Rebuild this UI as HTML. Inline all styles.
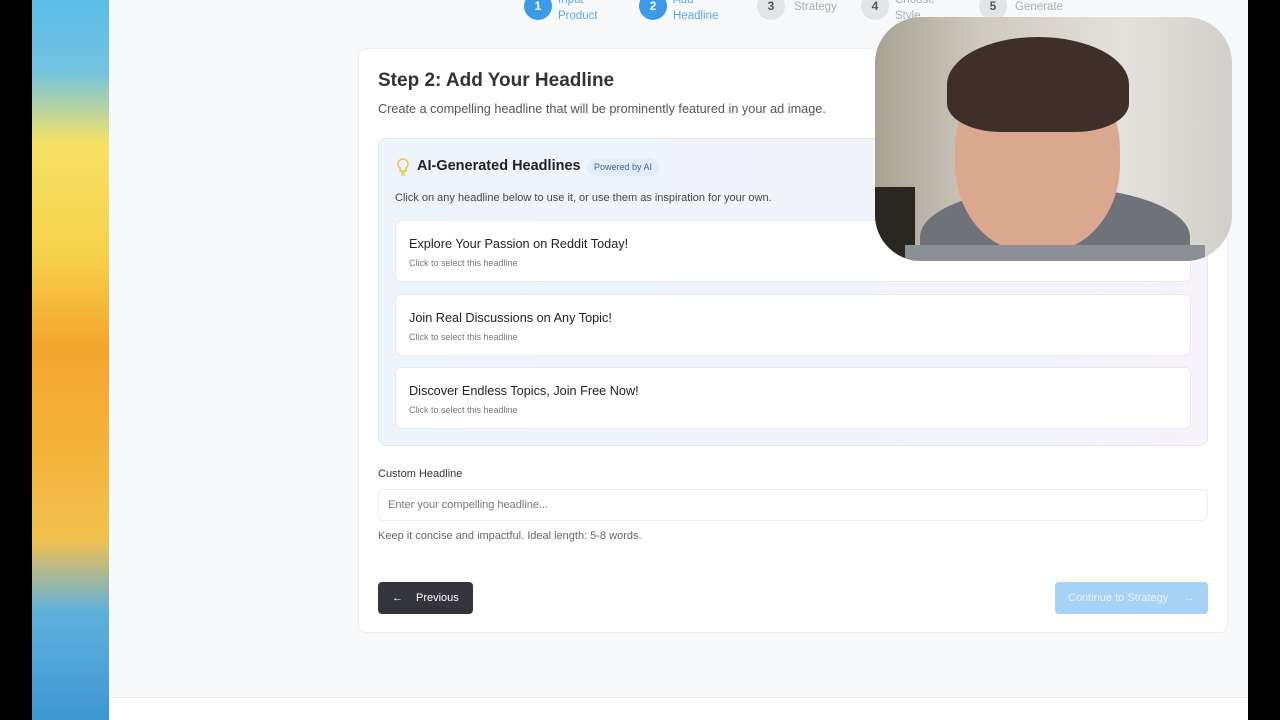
<!DOCTYPE html>
<html><head><meta charset="utf-8"><style>
*{margin:0;padding:0;box-sizing:border-box}
body{width:1280px;height:720px;overflow:hidden;position:relative;background:#f7f9fb;font-family:"Liberation Sans",sans-serif;color:#333}
.abs{position:absolute}
.circ{position:absolute;width:28px;height:28px;border-radius:50%;font-size:12px;font-weight:bold;display:flex;align-items:center;justify-content:center;top:-8px}
.lbl{position:absolute;font-size:11.5px;line-height:16px}
.item{position:absolute;left:395px;width:796px;height:62px;background:#fff;border:1px solid #e6e9ee;border-radius:6px}
.item .t{position:absolute;left:13px;top:16px;font-size:12.7px;color:#222}
.item .s{position:absolute;left:13px;top:37px;font-size:9px;color:#777}
</style></head><body>
<div class="abs" style="left:0;top:0;width:32px;height:720px;background:#000"></div>
<div class="abs" style="left:32px;top:0;width:77px;height:720px;background:linear-gradient(180deg,#5bbde8 0%,#75c3e0 10%,#f6e164 20%,#f6d24c 35%,#f3a52e 48%,#f5b33a 62%,#f0c050 75%,#5fb1dc 85%,#3e96d2 100%)"></div>
<div class="abs" style="left:1248px;top:0;width:32px;height:720px;background:#000"></div>
<div class="abs" style="left:109px;top:697px;width:1139px;height:23px;background:#fff;border-top:1px solid #e8ebef"></div>

<div class="circ" style="left:524px;background:#3b9be6;color:#fff">1</div>
<div class="lbl" style="left:558px;top:-8px;color:#5aa8e0">Input<br>Product</div>
<div class="circ" style="left:639px;background:#3b9be6;color:#fff">2</div>
<div class="lbl" style="left:673px;top:-8px;color:#5aa8e0">Add<br>Headline</div>
<div class="circ" style="left:757px;background:#e2e4e8;color:#555">3</div>
<div class="lbl" style="left:794px;top:-1px;color:#aaa">Strategy</div>
<div class="circ" style="left:861px;background:#e2e4e8;color:#555">4</div>
<div class="lbl" style="left:895px;top:-8px;color:#aaa">Choose<br>Style</div>
<div class="circ" style="left:979px;background:#e2e4e8;color:#555">5</div>
<div class="lbl" style="left:1015px;top:-1px;color:#aaa">Generate</div>

<div class="abs" style="left:358px;top:48px;width:870px;height:585px;background:#fff;border:1px solid #eceff2;border-radius:8px"></div>
<div class="abs" style="left:378px;top:70px;font-size:19px;font-weight:bold;color:#333">Step 2: Add Your Headline</div>
<div class="abs" style="left:378px;top:102px;font-size:12.7px;color:#555">Create a compelling headline that will be prominently featured in your ad image.</div>

<div class="abs" style="left:378px;top:138px;width:830px;height:308px;background:linear-gradient(90deg,#eef4fc,#f4f4fc 80%,#f8f2fa);border:1px solid #e3e8f0;border-radius:8px"></div>
<svg class="abs" style="left:396px;top:158px" width="14" height="18" viewBox="0 0 14 18"><path d="M7 1a5 5 0 0 0-3 9v3h6v-3a5 5 0 0 0-3-9z M5 15h4 M5.5 17h3" fill="none" stroke="#e8c44a" stroke-width="1.5"/></svg>
<div class="abs" style="left:417px;top:158px;font-size:14.5px;font-weight:bold;color:#222">AI-Generated Headlines</div>
<div class="abs" style="left:587px;top:158px;height:18px;padding:0 7px;border-radius:9px;background:#e3edfa;color:#3c5fa8;font-size:9px;line-height:18px">Powered by AI</div>
<div class="abs" style="left:395px;top:192px;font-size:11px;color:#444">Click on any headline below to use it, or use them as inspiration for your own.</div>

<div class="item" style="top:220px"><div class="t">Explore Your Passion on Reddit Today!</div><div class="s">Click to select this headline</div></div>
<div class="item" style="top:294px"><div class="t">Join Real Discussions on Any Topic!</div><div class="s">Click to select this headline</div></div>
<div class="item" style="top:367px"><div class="t">Discover Endless Topics, Join Free Now!</div><div class="s">Click to select this headline</div></div>

<div class="abs" style="left:378px;top:468px;font-size:11px;color:#333">Custom Headline</div>
<div class="abs" style="left:378px;top:489px;width:830px;height:32px;border:1px solid #eceff2;border-radius:5px;background:#fff"></div>
<div class="abs" style="left:388px;top:499px;font-size:11px;color:#777">Enter your compelling headline...</div>
<div class="abs" style="left:378px;top:530px;font-size:11px;color:#666">Keep it concise and impactful. Ideal length: 5-8 words.</div>

<div class="abs" style="left:378px;top:582px;width:95px;height:32px;background:#34343c;border-radius:4px;color:#fff;font-size:11px;line-height:32px"><span style="position:absolute;left:14px">←</span><span style="position:absolute;left:38px">Previous</span></div>
<div class="abs" style="left:1055px;top:582px;width:153px;height:32px;background:#a6d2f6;border-radius:4px;color:#e8f4fd;font-size:11px;line-height:32px"><span style="position:absolute;left:13px">Continue to Strategy</span><span style="position:absolute;left:129px">→</span></div>

<div class="abs" style="left:875px;top:17px;width:357px;height:244px;border-radius:46px;overflow:hidden;background:linear-gradient(90deg,#a8a294 0%,#cfc9bf 30%,#e4e1dc 70%,#d2cfca 100%)">
 <div class="abs" style="left:0;top:170px;width:40px;height:74px;background:#2a2622"></div>
 <div class="abs" style="left:45px;top:170px;width:270px;height:100px;border-radius:50% 50% 0 0;background:#6f7278"></div>
 <div class="abs" style="left:80px;top:40px;width:165px;height:195px;border-radius:48% 48% 45% 45%;background:#d9a88f"></div>
 <div class="abs" style="left:72px;top:20px;width:182px;height:95px;border-radius:50% 50% 30% 30%;background:#3e3028"></div>
 <div class="abs" style="left:30px;top:228px;width:300px;height:30px;background:#8c9096"></div>
</div>
</body></html>
